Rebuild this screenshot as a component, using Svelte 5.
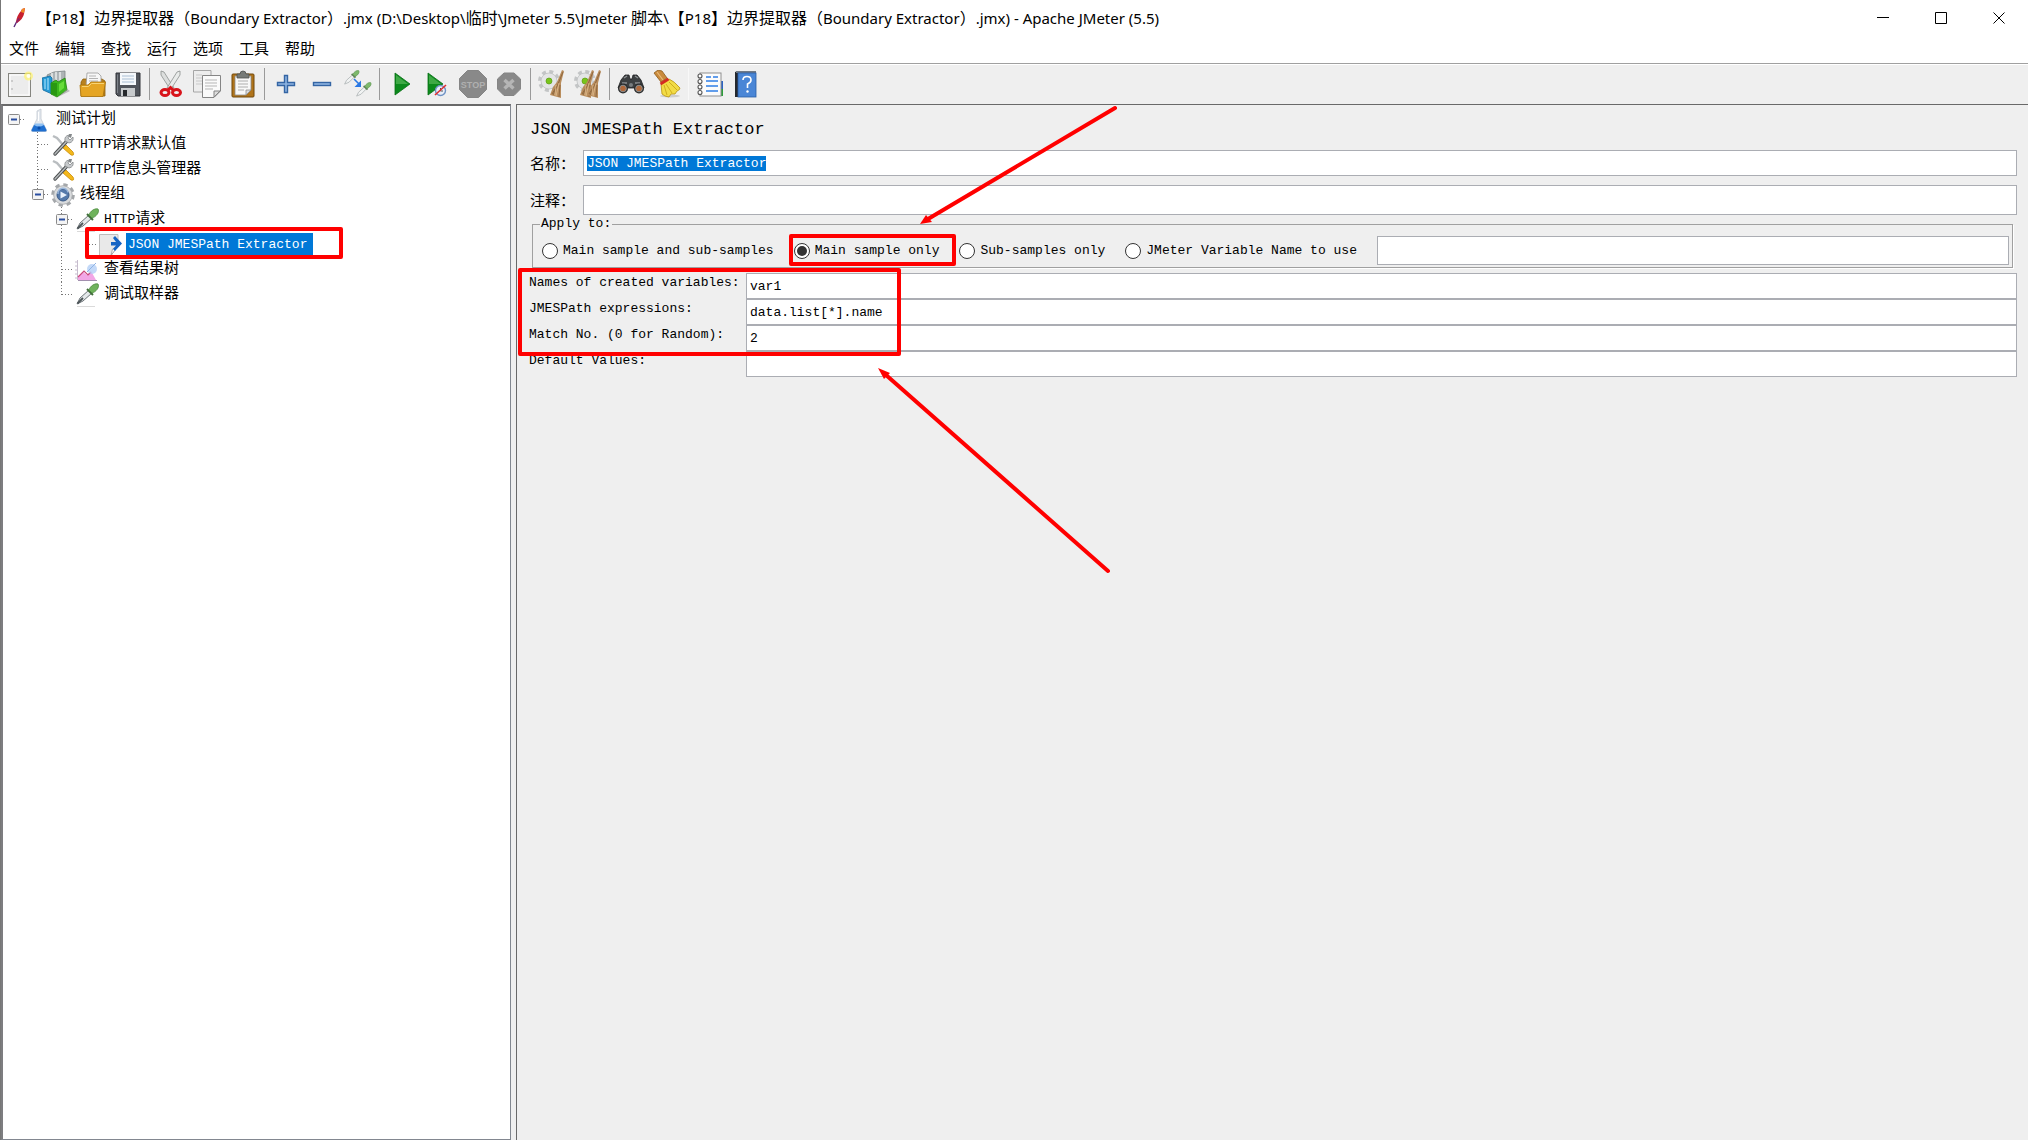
<script>
  import { onMount } from 'svelte';

  const title =
    '【P18】边界提取器（Boundary Extractor）.jmx (D:\\Desktop\\临时\\Jmeter 5.5\\Jmeter 脚本\\【P18】边界提取器（Boundary Extractor）.jmx) - Apache JMeter (5.5)';

  const menus = ['文件', '编辑', '查找', '运行', '选项', '工具', '帮助'];

  const toolGroups = [
    ['new', 'templates', 'open', 'save'],
    ['cut', 'copy', 'paste'],
    ['expand', 'collapse', 'toggle'],
    ['start', 'startNoPause', 'stop', 'shutdown'],
    ['clear', 'clearAll'],
    ['search', 'resetSearch'],
    ['functions', 'help']
  ];

  // trunk: levels whose vertical guide passes the row; a value of 'half' ends at the row's middle
  const rows = [
    { text: '测试计划', icon: 'flask', level: 0, open: true },
    { text: 'HTTP请求默认值', icon: 'tools', level: 1, trunk: { 1: 'full' } },
    { text: 'HTTP信息头管理器', icon: 'tools', level: 1, trunk: { 1: 'full' } },
    { text: '线程组', icon: 'gear', level: 1, open: true, trunk: { 1: 'half' } },
    { text: 'HTTP请求', icon: 'pipette', level: 2, open: true, trunk: { 2: 'full' } },
    { text: 'JSON JMESPath Extractor', icon: 'extractor', level: 3, selected: true, trunk: { 2: 'full', 3: 'half' } },
    { text: '查看结果树', icon: 'chart', level: 2, trunk: { 2: 'full' } },
    { text: '调试取样器', icon: 'pipette', level: 2, trunk: { 2: 'half' } }
  ];

  const scopes = ['Main sample and sub-samples', 'Main sample only', 'Sub-samples only', 'JMeter Variable Name to use'];
  let scope = $state('Main sample only');
  let variableName = $state('');
  let name = $state('JSON JMESPath Extractor');
  let comment = $state('');

  let fields = $state([
    { id: 'vars', label: 'Names of created variables:', value: 'var1' },
    { id: 'expr', label: 'JMESPath expressions:', value: 'data.list[*].name' },
    { id: 'match', label: 'Match No. (0 for Random):', value: '2' },
    { id: 'defaults', label: 'Default Values:', value: '' }
  ]);

  let nameInput;
  onMount(() => {
    nameInput.focus();
    nameInput.select();
  });

  const parts = (text) => text.split(/([\u2e80-\uffef]+)/).filter(Boolean);
  const isCjk = (text) => /[\u2e80-\uffef]/.test(text);
</script>

{#snippet mixed(text)}<span class="mixed">{#each parts(text) as part}<span class:latin={!isCjk(part)}>{part}</span>{/each}</span>{/snippet}

{#snippet pipetteShape()}
  <path d="M2 21 L5 15 L14 7 L17 10 L8 18 Z" fill="#e4e8ea" stroke="#6d7478" stroke-width="1" />
  <path d="M2.500 20.500 L8 15" stroke="#4d5558" stroke-width="1.800" />
  <path d="M12 6 L18 12" stroke="#3f6d38" stroke-width="2" />
  <path d="M14 7 C15 3 20 0 23 1 C25 4 21 9 17 10 Z" fill="#6fb35c" stroke="#4b8a3d" stroke-width=".8" />
{/snippet}

{#snippet lightPipette()}
  <path d="M1 22 L4 16 L14 7 L17 10 L8 19 Z" fill="#f1f3f3" stroke="#b3b8ba" stroke-width="1.400" />
  <path d="M12 6 L18 12" stroke="#5b7d55" stroke-width="2.600" />
  <path d="M14 7 C15 3 20 0 23 1 C25 4 21 9 17 10 Z" fill="#7db96c" stroke="#5c9450" />
{/snippet}

{#snippet treeIcon(kind)}
  <svg class="tree-icon" viewBox="0 0 24 24" aria-hidden="true">
    {#if kind === 'flask'}
      <path d="M10 3 L10 11 L4.500 22 Q4 23.500 6 23.500 L18 23.500 Q20 23.500 19.500 22 L14 11 L14 1 Z" fill="#e3e8ee" stroke="#c3c9d1" stroke-width=".8" />
      <path d="M7 17 L17 17 L19.500 22 Q20 23.500 18 23.500 L6 23.500 Q4 23.500 4.500 22 Z" fill="#1f6fd0" />
      <path d="M7 17 Q12 20 17 17 L16 15.500 L8 15.500 Z" fill="#8fc0f2" />
      <circle cx="12" cy="20" r="1.500" fill="#0a4ca8" />
      <path d="M11.500 4 V13" stroke="#fff" />
    {:else if kind === 'tools'}
      <path d="M2 3 L6 5 L13 13" fill="none" stroke="#b9bdc0" stroke-width="2.400" />
      <path d="M12 13 L15 12 L22 19 Q24 23 20 22 L12 15 Z" fill="#f3b81c" stroke="#c98b07" stroke-width=".8" />
      <path d="M4 21 L16 8" stroke="#4e5152" stroke-width="3.400" stroke-linecap="round" />
      <path d="M4 21 L16 8" stroke="#b7bbbd" stroke-width="1.400" stroke-linecap="round" />
      <path d="M14 8 Q13 3 18 2 L17 5 L19 7 L22 4 Q23 9 18 10 Z" fill="#c7cacc" stroke="#85898b" stroke-width=".8" />
      <path d="M18 1 L21 1 L20 5 L18 4 Z" fill="#85898b" />
    {:else if kind === 'gear'}
      <circle cx="12" cy="12" r="10" fill="none" stroke="#a4a7aa" stroke-width="3.600" stroke-dasharray="4.200 3.654" />
      <circle cx="12" cy="12" r="9.300" fill="#d9dbdd" stroke="#a4a7aa" stroke-width=".8" />
      <circle cx="12" cy="12" r="6" fill="#5579aa" stroke="#3a5a86" />
      <path d="M9.500 8.500 L16 12 L9.500 15.500 Z" fill="#e9f1fb" />
      <path d="M7 11 A5 5 0 0 1 17 9.500" fill="none" stroke="#9cb8dc" stroke-width="1.400" />
    {:else if kind === 'pipette'}
      {@render pipetteShape()}
      <path d="M2 23.500 H20" stroke="#d0d0d0" stroke-width=".8" />
    {:else if kind === 'extractor'}
      <path d="M.500 1.500 H19 V13 L12 22.500 H.500 Z" fill="#e9e9e9" stroke="#bdbdbd" />
      <path d="M19 13 L12 22.500 L13.500 16 Z" fill="#fff" stroke="#9b9b9b" stroke-width=".8" />
      <path d="M12 9 H17 L14 5 L16 3 L23 10.500 L16 18 L14 16 L17 12.500 H12 Z" fill="#1765c4" />
    {:else}
      <path d="M2.500 2 V22 M0 4 H2 M0 8 H2 M0 12 H2 M0 16 H2 M0 20 H2" stroke="#c6bccd" />
      <path d="M3 22 V19 L8 14 L12 17 L16 13 L21 22 Z" fill="#f2a6e6" />
      <path d="M3 19 L9 13 L13 17 L16 14" fill="none" stroke="#c9487c" stroke-width="1.200" />
      <circle cx="17" cy="11" r="5" fill="#b4d0f6" opacity=".8" />
      <path d="M12 14 L21 5" stroke="#8fb3e4" />
      <path d="M3 22.500 H22" stroke="#a28fae" />
    {/if}
  </svg>
{/snippet}

{#snippet gearShape(x, y)}
  <g transform="translate({x} {y})">
    <circle r="9" fill="none" stroke="#c3c5c6" stroke-width="4" stroke-dasharray="3.800 3.269" />
    <circle r="8" fill="#e4e5e6" stroke="#b9bbbc" stroke-width=".7" />
    <circle r="3" fill="#79c51c" stroke="#5c9c13" stroke-width=".7" />
  </g>
{/snippet}

{#snippet brushShape()}
  <path d="M24 0 L26 1 L23 13 L23 28 L12 25 L15 17 L19 12 Z" fill="#b98d5d" />
  <path d="M25 2 L20 14 L15 25 M19 16 L14 24 M22 15 L21 27" fill="none" stroke="#7d5730" stroke-width=".7" />
  <path d="M18 15 L17 25 M21 13 L18 26" stroke="#dfbd8f" stroke-width=".8" />
{/snippet}

{#snippet toolIcon(kind)}
  <svg class="tool-icon" viewBox="0 0 28 28" aria-hidden="true">
    {#if kind === 'new'}
      <rect x="2.500" y="3.500" width="22" height="23" fill="#ececec" stroke="#85857f" />
      <rect x="4" y="5" width="19" height="20" fill="none" stroke="#fff" />
      <path d="M6 10 V12 M6 18 V20" stroke="#aaa" />
      <circle cx="22.500" cy="6" r="4.500" fill="#fff36b" opacity=".7" />
      <circle cx="22.500" cy="6" r="2" fill="#fffef0" />
    {:else if kind === 'templates'}
      <path d="M5 5 L12 2 L23 1 V15 L10 20 Z" fill="#aeb4b6" stroke="#7e8587" stroke-width=".8" />
      <path d="M10 3 V12 M14 2 V11 M18 2 V11" stroke="#e9ecec" stroke-width="1.500" />
      <path d="M0 8 L8 6 L10 8 V24 L1 20 Z" fill="#2699d4" stroke="#116a9e" stroke-width=".8" />
      <path d="M3 9 V19 M6 8 V20" stroke="#9fdcf8" stroke-width="1.200" />
      <path d="M9 13 L14 10 L16 12 L23 8 L25 20 L15 27 L9 24 Z" fill="#3cb81d" stroke="#24840f" stroke-width=".8" />
      <path d="M15 13 L15 26 L9 24 V13 Z" fill="#2a9812" />
      <path d="M17 14 L22 11 V18 L17 22 Z" fill="#67dc3a" />
      <path d="M16 27 L28 21 L25 19" fill="#9a9a9a" opacity=".6" />
    {:else if kind === 'open'}
      <path d="M3 12 L5 9 H24 L27 11 V26 H3 Z" fill="#b98220" stroke="#8d5f0d" stroke-width=".8" />
      <path d="M9 3 H20 L23 6 V17 H8 Z" fill="#f7f7f7" stroke="#999" stroke-width=".8" />
      <path d="M11 6 H18 M11 8.500 H20 M11 11 H20" stroke="#b3b3b3" />
      <path d="M2 15 H10 L13 12 H27.500 L25 26.500 H3 Z" fill="#e5a524" stroke="#a9730d" stroke-width=".8" />
      <path d="M4 16.500 H10.500 L13.500 13.500 H26" fill="none" stroke="#f8d374" />
    {:else if kind === 'save'}
      <path d="M2 3 H26 V26 H4 L2 24 Z" fill="#50545b" stroke="#32353a" />
      <rect x="6" y="3" width="16" height="12" fill="#f5f8fb" />
      <path d="M8 6 H20 M8 9 H20 M8 12 H20" stroke="#a9bed3" stroke-width="1.200" />
      <rect x="7" y="18" width="14" height="8" fill="#c7cacc" />
      <rect x="9" y="20" width="4" height="6" fill="#25282b" />
      <path d="M3.500 4.500 V23" stroke="#7d8289" />
    {:else if kind === 'cut'}
      <path d="M4 1 L7 2 L17 18 L13 19 L4 5 Z" fill="#dcdedd" stroke="#8c8f8e" stroke-width=".8" />
      <path d="M23 1 L20 2 L10 18 L14 19 L23 5 Z" fill="#e9ebea" stroke="#8c8f8e" stroke-width=".8" />
      <ellipse cx="8" cy="22.500" rx="4" ry="3" fill="#efefef" stroke="#d8141b" stroke-width="3" />
      <ellipse cx="19.500" cy="22.500" rx="4" ry="3" fill="#efefef" stroke="#d8141b" stroke-width="3" />
      <path d="M11 20 L13.500 17.500 L16 20" fill="none" stroke="#d8141b" stroke-width="3" />
    {:else if kind === 'copy'}
      <path d="M.500 .500 H18 V22 H.500 Z" fill="#ededed" stroke="#a6a6a6" />
      <path d="M3 5 H9 M3 8 H9 M3 11 H9 M3 14 H9" stroke="#c9c9c9" />
      <path d="M9.500 5.500 H27.500 V21 L21 27.500 H9.500 Z" fill="#fafafa" stroke="#858585" />
      <path d="M12 10 H24 M12 13 H24 M12 16 H24 M12 19 H20" stroke="#b5b5b5" />
      <path d="M21 27 V21 H27 Z" fill="#ddd" stroke="#858585" />
    {:else if kind === 'paste'}
      <rect x="3" y="4" width="22" height="23" rx="1" fill="#b0741a" stroke="#70480c" />
      <path d="M6 6 H22 V20 L17 25 H6 Z" fill="#f8f8f8" stroke="#8e8e8e" stroke-width=".8" />
      <path d="M9 11 H19 M9 14 H19 M9 17 H19 M9 20 H15" stroke="#aeaeae" />
      <path d="M17 25 V20 H22 Z" fill="#ddd" stroke="#8e8e8e" stroke-width=".8" />
      <path d="M8 8 V4 H11 Q11 1 14 1 Q17 1 17 4 H20 V8 Z" fill="#777b78" stroke="#4e514f" stroke-width=".8" />
    {:else if kind === 'expand'}
      <path d="M12.500 5.500 H15.500 V12.500 H22.500 V15.500 H15.500 V22.500 H12.500 V15.500 H5.500 V12.500 H12.500 Z" fill="#8fb5e2" stroke="#3465a4" stroke-width="1.400" />
    {:else if kind === 'collapse'}
      <rect x="5.500" y="12.500" width="17" height="3" fill="#8fb5e2" stroke="#3465a4" stroke-width="1.400" />
    {:else if kind === 'toggle'}
      <g transform="translate(0 0) scale(.64)">{@render lightPipette()}</g>
      <g transform="translate(12 12) scale(.64)">{@render lightPipette()}</g>
      <path d="M10 9 L15 14" stroke="#2b78e4" stroke-width="1.600" />
      <path d="M17 10.500 V17 H10.500 Z" fill="#2b78e4" />
    {:else if kind === 'start'}
      <path d="M8 3 L23 14 L8 25 Z" fill="#0c8a1c" stroke="#087015" stroke-width=".8" />
      <path d="M9 5 L21 14 H9 Z" fill="#4bb050" opacity=".8" />
    {:else if kind === 'startNoPause'}
      <path d="M5 3 L20 14 L5 25 Z" fill="#0c8a1c" stroke="#087015" stroke-width=".8" />
      <path d="M6 5 L18 14 H6 Z" fill="#4bb050" opacity=".8" />
      <circle cx="17.500" cy="20.500" r="5" fill="#e8eef8" stroke="#6f92c4" stroke-width="1.400" />
      <path d="M17.500 18 V21 H20" fill="none" stroke="#555" />
      <path d="M12 25 L23 15" stroke="#e03030" stroke-width="1.600" />
    {:else if kind === 'stop'}
      <path d="M8.500 .500 H19.500 L27.500 8.500 V19.500 L19.500 27.500 H8.500 L.500 19.500 V8.500 Z" fill="#898989" stroke="#858585" />
      <text x="14" y="18" text-anchor="middle" class="stop-text">STOP</text>
    {:else if kind === 'shutdown'}
      <path d="M9 3 H19 L25.500 9 V19 L19 25.500 H9 L2.500 19 V9 Z" fill="#898989" stroke="#858585" />
      <path d="M9.500 10 L18.500 18.500 M18.500 10 L9.500 18.500" stroke="#b5b5b5" stroke-width="3.400" />
    {:else if kind === 'clear'}
      {@render gearShape(11, 11)}
      {@render brushShape()}
    {:else if kind === 'clearAll'}
      {@render gearShape(11, 11)}
      <g transform="translate(-6 0)">{@render brushShape()}</g>
      <g transform="translate(1 0)">{@render brushShape()}</g>
    {:else if kind === 'search'}
      <path d="M4 10 L8 5 H12 L13 9 H15 L16 5 H20 L24 10 L27 18 H1 Z" fill="#3c3f41" stroke="#1e2021" stroke-width=".8" />
      <path d="M7 8 L10 6 M18 6 L21 8 M5 13 H10 M18 13 H23" stroke="#8b8f91" stroke-width="1.400" />
      <circle cx="6" cy="18.500" r="5" fill="#2b2d2e" />
      <circle cx="22" cy="18.500" r="5" fill="#2b2d2e" />
      <circle cx="6" cy="18.500" r="3.300" fill="#b0683a" stroke="#8d8f90" />
      <circle cx="22" cy="18.500" r="3.300" fill="#b0683a" stroke="#8d8f90" />
      <circle cx="14" cy="15" r="2" fill="#787c7e" />
    {:else if kind === 'resetSearch'}
      <ellipse cx="17" cy="26" rx="10" ry="1.500" fill="#b5b5b5" opacity=".6" />
      <path d="M1 3 L5 0 L9 1 L14 8 L8 12 Z" fill="#c98a3c" stroke="#8d5a1b" stroke-width=".8" />
      <path d="M4 2 L10 10" stroke="#e9b979" stroke-width="1.200" />
      <path d="M8 14 L16 9 Q21 11 27 18 Q27 20 24 21 L22 24 L18 24 L16 27 L12 26 L9 24 Z" fill="#f2dc45" stroke="#b7930f" stroke-width=".8" />
      <path d="M11 15 L14 25 M13 14 L19 23 M16 12 L24 20" stroke="#cfae1d" />
      <path d="M7.500 14 L15.500 9" stroke="#d42b20" stroke-width="3" />
    {:else if kind === 'functions'}
      <path d="M24 13 H27 V26 H24 Z" fill="#2c9d3a" />
      <path d="M24 11 H27 V19 H24 Z" fill="#2c64c4" />
      <rect x="4" y="3" width="21" height="23" fill="#fbfbfb" stroke="#8f8f8f" />
      <path d="M10 7 H15 M17 7 H22 M10 11 H22 M10 16 H22 M10 21 H22" stroke="#2f7fe6" stroke-width="1.600" />
      <g fill="#fff" stroke="#555" stroke-width="1.100">
        <circle cx="4" cy="6" r="2" /><circle cx="4" cy="11.500" r="2" /><circle cx="4" cy="17" r="2" /><circle cx="4" cy="22.500" r="2" />
      </g>
    {:else}
      <path d="M3 2 L6 1 V27 H3 Z" fill="#24282e" />
      <path d="M4 1 H24 V3 H4 Z" fill="#707a86" />
      <rect x="6" y="3" width="18" height="24" fill="#4a86d6" stroke="#2a5fa8" stroke-width=".8" />
      <path d="M11 10 Q11 6.500 15 6.500 Q19 6.500 19 10 Q19 12.500 15.500 14 V18" fill="none" stroke="#fff" stroke-width="1.600" />
      <circle cx="15.500" cy="21.500" r="1.200" fill="#fff" />
    {/if}
  </svg>
{/snippet}

<div class="window">
  <header class="titlebar">
    <svg class="feather" viewBox="0 0 16 20" aria-hidden="true">
      <path d="M2 19 L5 13" stroke="#5b2a7a" stroke-width="1.400" />
      <path d="M4 14 Q5 7 9 3 L10 1 L13 0 L12 6 Q11 11 5 15 Z" fill="#c8202f" />
      <path d="M9 4 L10 1 L13 0 L12 5 Z" fill="#f08a24" />
      <path d="M4 14 L6 10 L8 11 L5 15 Z" fill="#8a2268" />
    </svg>
    <h1>{@render mixed(title)}</h1>
    <div class="window-buttons">
      <button aria-label="Minimize"><svg viewBox="0 0 12 12"><path d="M0 5.500 H12" /></svg></button>
      <button aria-label="Maximize"><svg viewBox="0 0 12 12"><path d="M.500 .500 H11.500 V11.500 H.500 Z" /></svg></button>
      <button aria-label="Close"><svg viewBox="0 0 12 12"><path d="M.500 .500 L11.500 11.500 M11.500 .500 L.500 11.500" /></svg></button>
    </div>
  </header>

  <nav class="menubar">
    {#each menus as item}<button>{item}</button>{/each}
  </nav>

  <div class="toolbar" role="toolbar" aria-label="Tools">
    {#each toolGroups as group, i}
      {#if i > 0}<span class={['divider', i === 6 && 'faint']}></span>{/if}
      {#each group as kind}
        <button aria-label={kind}>{@render toolIcon(kind)}</button>
      {/each}
    {/each}
  </div>

  <main>
    <aside>
      <ul class="tree">
        {#each rows as row}
          {@const width = 24 + row.level * 24}
          {@const x = 11 + row.level * 24}
          <li>
            <svg class="guides" style:width="{width}px" viewBox="0 0 {width} 25" aria-hidden="true">
              <g stroke="#777" stroke-dasharray="1 2">
                {#each Object.entries(row.trunk ?? {}) as [level, span]}
                  <path d="M{10.5 + level * 24} 0 V{span === 'half' ? 13 : 25}" />
                {/each}
                <path d="M{row.open ? x + 6 : x} 12.500 H{width - 1}" />
              </g>
              {#if row.open}
                <rect x={x - 5.5} y="7.500" width="11" height="10" rx="1" fill="#f4f4f4" stroke="#8a8a8a" />
                <path d="M{x - 3} 12.500 H{x + 3}" stroke="#2a4ea0" stroke-width="2" />
              {/if}
            </svg>
            {@render treeIcon(row.icon)}
            <button class={['node', row.selected && 'selected']}>{@render mixed(row.text)}</button>
          </li>
        {/each}
      </ul>
    </aside>

    <section class="editor">
      <h2>JSON JMESPath Extractor</h2>
      <div class="line">
        <label for="name">名称：</label>
        <input id="name" class="text" bind:value={name} bind:this={nameInput} />
      </div>
      <div class="line tall">
        <label for="comment">注释：</label>
        <input id="comment" class="text" bind:value={comment} />
      </div>

      <fieldset>
        <legend>Apply to:</legend>
        <div class="scopes">
          {#each scopes as option}
            <label class="radio"><input type="radio" name="scope" value={option} bind:group={scope} />{option}</label>
          {/each}
          <input class="text" aria-label="Variable name" bind:value={variableName} />
        </div>
      </fieldset>

      <div class="fields">
        {#each fields as field}
          <label for={field.id}>{field.label}</label>
          <input id={field.id} class="text" bind:value={field.value} />
        {/each}
      </div>
    </section>
  </main>

  <svg class="marks" aria-hidden="true">
    <g fill="none" stroke="#f00" stroke-width="4" stroke-linejoin="round">
      <rect x="87" y="229" width="254" height="28" />
      <rect x="791" y="236" width="163" height="28" />
      <rect x="520" y="270" width="379" height="84" />
    </g>
    <g stroke="#f00" stroke-width="4" stroke-linecap="round">
      <path d="M1115 108 L928 219" />
      <path d="M1108 571 L886 375" />
    </g>
    <g fill="#f00">
      <path d="M920 224 L926 215 L932 222 Z" />
      <path d="M878 368 L890 373 L884 379 Z" />
    </g>
  </svg>
</div>

<style>
  :global(body) {
    margin: 0;
    background: #efefef;
  }

  .window {
    --mono: 'Liberation Mono', 'Noto Sans CJK SC', monospace;
    position: relative;
    display: flex;
    flex-direction: column;
    min-height: 100vh;
    box-sizing: border-box;
    border-left: 1px solid #777;
    color: #000;
    font-family: var(--mono);
    font-size: 13px;
  }

  button {
    padding: 0;
    border: 0;
    background: none;
    color: inherit;
    font: inherit;
  }

  .mixed {
    font-size: 15px;
    white-space: nowrap;
  }

  .latin {
    font-size: 13px;
  }

  .titlebar {
    display: flex;
    align-items: center;
    height: 36px;
    padding-left: 11px;
    background: #fff;
  }

  .feather {
    width: 16px;
    height: 20px;
    margin-right: 8px;
  }

  h1 {
    flex: 1;
    margin: 0;
    font: 400 16px/20px 'Noto Sans', 'Noto Sans CJK SC', sans-serif;
  }

  h1 .mixed {
    font-size: 16px;
  }

  h1 .latin {
    font-size: 15px;
  }

  .window-buttons {
    display: flex;
  }

  .window-buttons button {
    display: grid;
    place-items: center;
    width: 58px;
    height: 36px;
  }

  .window-buttons svg {
    width: 12px;
    height: 12px;
    fill: none;
    stroke: #000;
  }

  .menubar {
    display: flex;
    gap: 16px;
    height: 27px;
    padding-left: 8px;
    border-bottom: 1px solid #a0a0a0;
    background: #fff;
    font: 15px/24px 'Noto Sans CJK SC', sans-serif;
  }

  .menubar button {
    height: 24px;
  }

  .toolbar {
    display: flex;
    align-items: center;
    height: 37px;
    padding: 0 0 2px 1px;
    border-top: 1px solid #fff;
    background: #efefef;
  }

  .toolbar button {
    display: grid;
    place-items: center;
    width: 36px;
    height: 36px;
  }

  .tool-icon {
    width: 28px;
    height: 28px;
  }

  .stop-text {
    fill: #b0b0b0;
    font: 700 9px 'Liberation Sans', sans-serif;
  }

  .divider {
    width: 1px;
    height: 32px;
    margin: 0 3px;
    background: #9a9a9a;
  }

  .divider.faint {
    background: #f8f8f8;
  }

  main {
    flex: 1;
    display: flex;
    gap: 5px;
  }

  aside {
    flex: 0 0 25%;
    min-width: 510px;
    max-width: 510px;
    box-sizing: border-box;
    border: 1px solid #828790;
    border-top: 2px solid #696969;
    border-left: 2px solid #7d7d80;
    background: #fff;
  }

  .tree {
    margin: 0;
    padding: 1px 0 0;
    list-style: none;
  }

  .tree li {
    display: flex;
    align-items: center;
    height: 25px;
  }

  .guides {
    flex: none;
    height: 25px;
  }

  .tree-icon {
    flex: none;
    width: 24px;
    height: 24px;
  }

  .node {
    height: 24px;
    padding: 0 6px 0 2px;
    margin-left: 3px;
    line-height: 24px;
  }

  .node.selected {
    background: #0078d7;
    color: #fff;
  }

  .editor {
    flex: 1;
    padding: 15px 11px 0 12px;
    border-top: 1px solid #696969;
    border-left: 1px solid #696969;
  }

  h2 {
    margin: 0 0 10px 1px;
    font: 400 17px/20px var(--mono);
  }

  .text {
    box-sizing: border-box;
    min-width: 0;
    height: 26px;
    padding: 0 3px;
    border: 1px solid #abadb3;
    border-radius: 0;
    outline: 0;
    background: #fff;
    color: #000;
    font: 13px/19px var(--mono);
  }

  .text::selection {
    background: #0078d7;
    color: #fff;
  }

  .line {
    display: flex;
    align-items: center;
    margin: 0 0 9px 1px;
  }

  .line label {
    width: 53px;
    font: 15px/20px 'Noto Sans CJK SC', sans-serif;
  }

  .line .text {
    flex: 1;
  }

  .line.tall {
    margin-bottom: 0;
  }

  .tall .text {
    height: 30px;
  }

  fieldset {
    min-width: 0;
    margin: 0 4px 5px 3px;
    padding: 0 3px 2px 9px;
    border: 1px solid #a0a0a0;
    box-shadow: 1px 1px 0 #fff;
  }

  legend {
    padding: 0 1px;
    margin-left: -2px;
    line-height: 18px;
  }

  .scopes {
    display: flex;
    align-items: center;
    padding-top: 3px;
  }

  .radio {
    display: flex;
    align-items: center;
    gap: 5px;
    margin-right: 20px;
    white-space: nowrap;
  }

  .radio input {
    appearance: none;
    display: grid;
    place-items: center;
    width: 16px;
    height: 16px;
    margin: 0;
    border: 1px solid #333;
    border-radius: 50%;
    background: #fff;
  }

  .radio input:checked::before {
    content: '';
    width: 10px;
    height: 10px;
    border-radius: 50%;
    background: #333;
  }

  .scopes .text {
    flex: 1;
    height: 29px;
  }

  .fields {
    display: grid;
    grid-template-columns: 217px 1fr;
  }

  .fields label {
    line-height: 20px;
    white-space: nowrap;
  }

  .marks {
    position: absolute;
    top: 0;
    left: -1px;
    width: 100%;
    height: 100%;
    overflow: visible;
    pointer-events: none;
  }
</style>
